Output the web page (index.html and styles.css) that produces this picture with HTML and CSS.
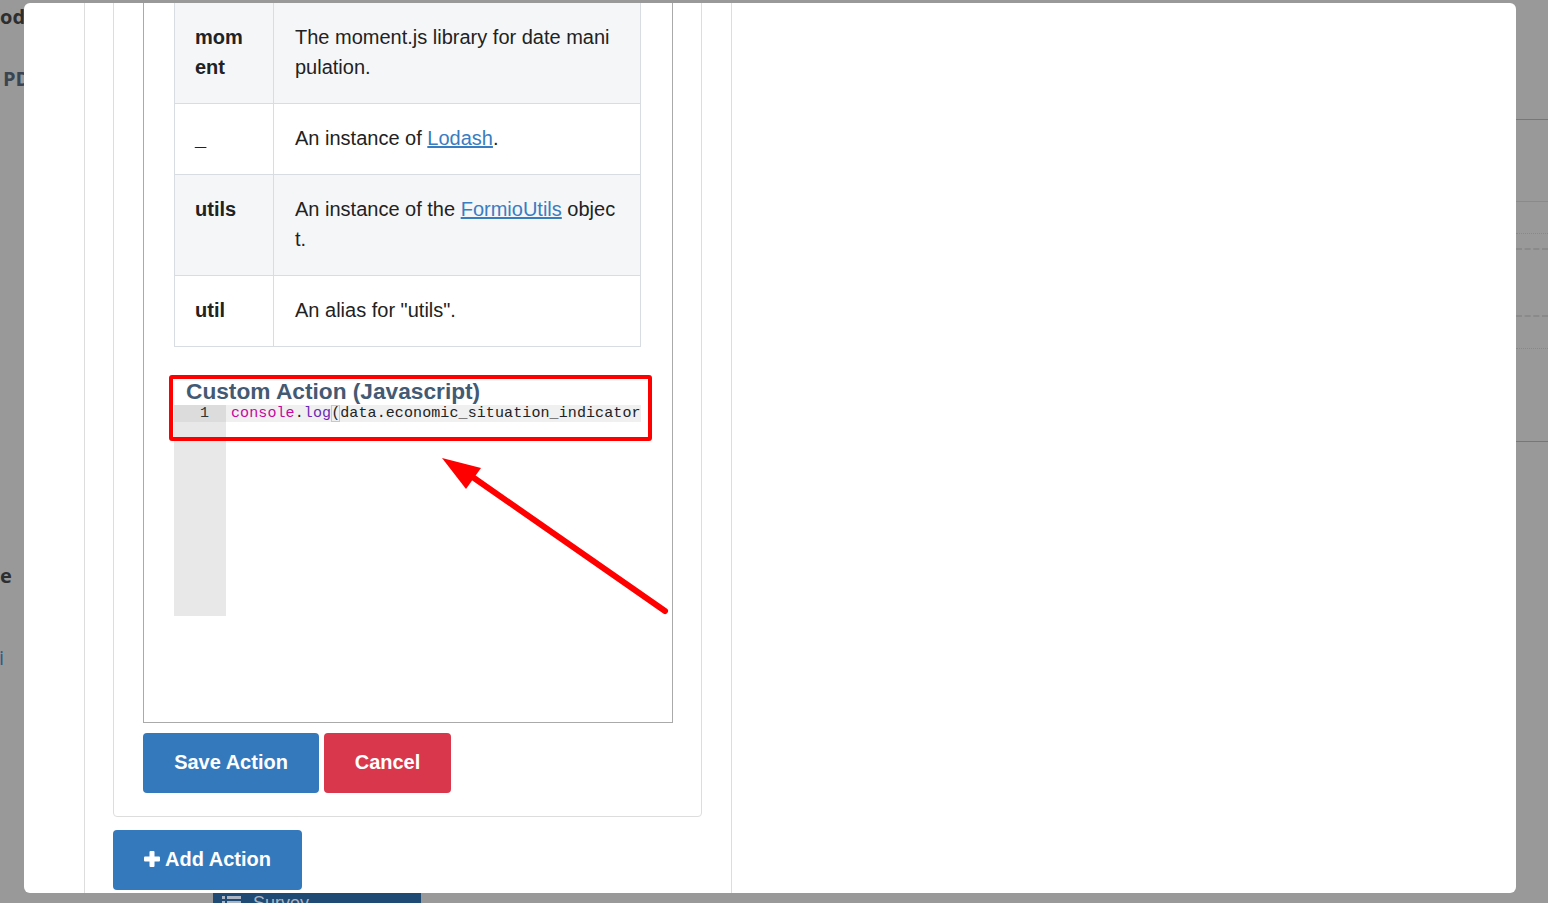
FILE: index.html
```html
<!DOCTYPE html>
<html>
<head>
<meta charset="utf-8">
<title>Custom Action</title>
<link rel="stylesheet" href="styles.css">
</head>
<body>
<div class="page">
  <div class="bg-left">
    <div class="bg-t bg-t1">od</div>
    <div class="bg-t bg-t2">PD</div>
    <div class="bg-t bg-t3">e</div>
    <div class="bg-t bg-t4">i</div>
  </div>
  <div class="bg-main"></div>
  <div class="bg-right">
    <div class="rl rl-solid rl-1"></div>
    <div class="rl rl-light rl-2"></div>
    <div class="rl rl-dot rl-3"></div>
    <div class="rl rl-dash rl-4"></div>
    <div class="rl rl-dash rl-5"></div>
    <div class="rl rl-dot rl-6"></div>
    <div class="rl rl-solid rl-7"></div>
  </div>
  <div class="bg-bottom">
    <div class="survey-bar">
      <svg class="list-icon" width="20" height="14" viewBox="0 0 20 14"><rect x="0" y="1" width="3" height="3" fill="#aab4c2"/><rect x="5" y="1" width="14" height="3" fill="#aab4c2"/><rect x="0" y="6" width="3" height="3" fill="#aab4c2"/><rect x="5" y="6" width="14" height="3" fill="#aab4c2"/><rect x="0" y="11" width="3" height="3" fill="#aab4c2"/><rect x="5" y="11" width="14" height="3" fill="#aab4c2"/></svg>
      <span class="survey-text">Survey</span>
    </div>
  </div>
</div>

<div class="modal">
  <div class="modal-content">
    <div class="col">
      <div class="card">
        <div class="form">
          <table class="vars">
            <colgroup><col class="c1"><col class="c2"></colgroup>
            <tr class="odd"><th>moment</th><td>The moment.js library for date manipulation.</td></tr>
            <tr><th>_</th><td>An instance of <a href="#">Lodash</a>.</td></tr>
            <tr class="odd"><th>utils</th><td>An instance of the <a href="#">FormioUtils</a> object.</td></tr>
            <tr><th>util</th><td>An alias for "utils".</td></tr>
          </table>
          <div class="field-label">Custom Action (Javascript)</div>
          <div class="code">
            <div class="gutter"><div class="gutter-cell">1</div></div>
            <div class="lines">
              <div class="line"><span class="tk-fn">console</span>.<span class="tk-m">log</span><span class="tk-br">(</span>data.economic_situation_indicator);</div>
            </div>
          </div>
        </div>
        <div class="btns">
          <button class="btn btn-primary">Save Action</button>
          <button class="btn btn-danger">Cancel</button>
        </div>
      </div>
      <button class="btn btn-primary btn-add"><svg class="plus" width="16" height="16" viewBox="0 0 16 16"><rect x="5.5" y="0" width="5" height="16" rx="1" fill="#fff"/><rect x="0" y="5.5" width="16" height="5" rx="1" fill="#fff"/></svg><span>Add Action</span></button>
    </div>
  </div>
</div>

<div class="annot-box"></div>
<svg class="annot-arrow" width="1548" height="903" viewBox="0 0 1548 903">
  <line x1="665" y1="611" x2="474" y2="478" stroke="#ff0000" stroke-width="6" stroke-linecap="round"/>
  <polygon points="442,458 481,468 466,489" fill="#ff0000"/>
</svg>
</body>
</html>
```

FILE: styles.css
```css
* { box-sizing: border-box; }
html, body { margin: 0; padding: 0; }
body {
  width: 1548px;
  height: 903px;
  overflow: hidden;
  font-family: "Liberation Sans", Arial, sans-serif;
  background: #999;
  position: relative;
}

/* background page (under backdrop) */
.page {
  width: 1548px;
  height: 903px;
  display: grid;
  grid-template-columns: 24px 1fr 32px;
  grid-template-rows: 893px 10px;
  background: #999;
}
.bg-left { overflow: hidden; }
.bg-t {
  font-family: "Open Sans", sans-serif;
  font-weight: 700;
  font-size: 20px;
  line-height: 24px;
  white-space: nowrap;
}
.bg-t1 { margin-top: 5px; color: #2e2e2e; }
.bg-t2 { margin-top: 38px; padding-left: 3px; color: #3b4551; }
.bg-t3 { margin-top: 473px; color: #2e2e2e; }
.bg-t4 { margin-top: 58px; margin-left: -1px; color: #2f5b86; font-weight: 400; }
.bg-right { overflow: hidden; }
.rl { height: 0; }
.rl-solid { border-top: 1px solid #777; }
.rl-light { border-top: 1px solid #8a8a8a; }
.rl-dot { border-top: 1px dotted #888; }
.rl-dash { border-top: 2px dashed #8a8a8a; }
.rl-1 { margin-top: 119px; }
.rl-2 { margin-top: 81px; }
.rl-3 { margin-top: 31px; }
.rl-4 { margin-top: 14px; }
.rl-5 { margin-top: 65px; }
.rl-6 { margin-top: 31px; }
.rl-7 { margin-top: 92px; }
.bg-bottom {
  grid-column: 1 / 4;
  display: flex;
  overflow: hidden;
}
.survey-bar {
  margin-left: 213px;
  width: 208px;
  height: 10px;
  background: #1f4a73;
  display: flex;
  align-items: flex-start;
  overflow: hidden;
}
.list-icon { margin-left: 9px; margin-top: 2px; flex: none; }
.survey-text {
  margin-left: 11px;
  font-size: 18px;
  line-height: 20px;
  color: #aab4c2;
}

/* modal */
.modal {
  position: absolute;
  left: 24px;
  top: 3px;
  width: 1492px;
  height: 890px;
  background: #fff;
  border-radius: 6px;
  overflow: hidden;
}
.modal-content { margin-top: -43px; }
.col {
  margin-left: 60px;
  width: 648px;
  min-height: 1000px;
  border-left: 1px solid #ddd;
  border-right: 1px solid #ddd;
  padding-left: 28px;
}
.card {
  width: 589px;
  border: 1px solid #ddd;
  border-radius: 4px;
  padding: 20px 28px 23px 29px;
}
.form {
  width: 530px;
  border: 1px solid #aaa;
  padding: 20px 30px 106px 30px;
}

table.vars {
  width: 467px;
  border-collapse: collapse;
  table-layout: fixed;
  font-size: 20px;
  line-height: 30px;
  color: #222;
}
table.vars col.c1 { width: 99px; }
table.vars th, table.vars td {
  border: 1px solid #d8dde3;
  padding: 19px 20px 21px 20px;
  text-align: left;
  vertical-align: top;
  word-break: break-all;
}
table.vars td { padding-left: 21px; padding-right: 23px; }
table.vars th { font-weight: 700; }
table.vars tr.odd { background: #f5f6f8; }
table.vars a { color: #3a7cc0; text-decoration: underline; }

.field-label {
  margin: 32px 0 1px 12px;
  font-size: 22.7px;
  line-height: 25px;
  font-weight: 700;
  color: #435a74;
  white-space: nowrap;
}

.code {
  width: 467px;
  height: 211px;
  display: flex;
  overflow: hidden;
  font-family: "Liberation Mono", "Courier New", monospace;
  font-size: 15px;
  line-height: 17px;
  color: #222;
}
.gutter {
  width: 52px;
  flex: none;
  background: #e8e8e8;
}
.gutter-cell {
  background: #dcdcdc;
  text-align: right;
  padding-right: 17px;
  color: #333;
}
.lines { flex: 1; overflow: hidden; }
.line {
  background: #f0f0f0;
  padding-left: 5px;
  white-space: pre;
  letter-spacing: 0.1px;
}
.tk-fn { color: #c5069f; }
.tk-m { color: #6a2ab5; }
.tk-br { box-shadow: inset 0 0 0 1px #c8c8c8; }

.btns {
  margin-top: 10px;
  display: flex;
  gap: 5px;
}
.btn {
  height: 60px;
  border: none;
  border-radius: 4px;
  padding: 0 30px 2px 30px;
  font-family: "Liberation Sans", Arial, sans-serif;
  font-size: 20px;
  font-weight: 700;
  color: #fff;
  cursor: pointer;
}
.btn-primary { background: #3579bd; }
.btn-danger { background: #d9374c; }
.btns .btn-primary { width: 176px; }
.btns .btn-danger { width: 127px; }
.btn-add {
  margin-top: 13px;
  width: 189px;
  padding: 0 0 2px 31px;
  display: flex;
  align-items: center;
  gap: 5px;
}
.plus { flex: none; }

/* annotations */
.annot-box {
  position: absolute;
  left: 169px;
  top: 375px;
  width: 483px;
  height: 66px;
  border: 4px solid #ff0000;
  border-radius: 3px;
}
.annot-arrow {
  position: absolute;
  left: 0;
  top: 0;
  pointer-events: none;
}
```
